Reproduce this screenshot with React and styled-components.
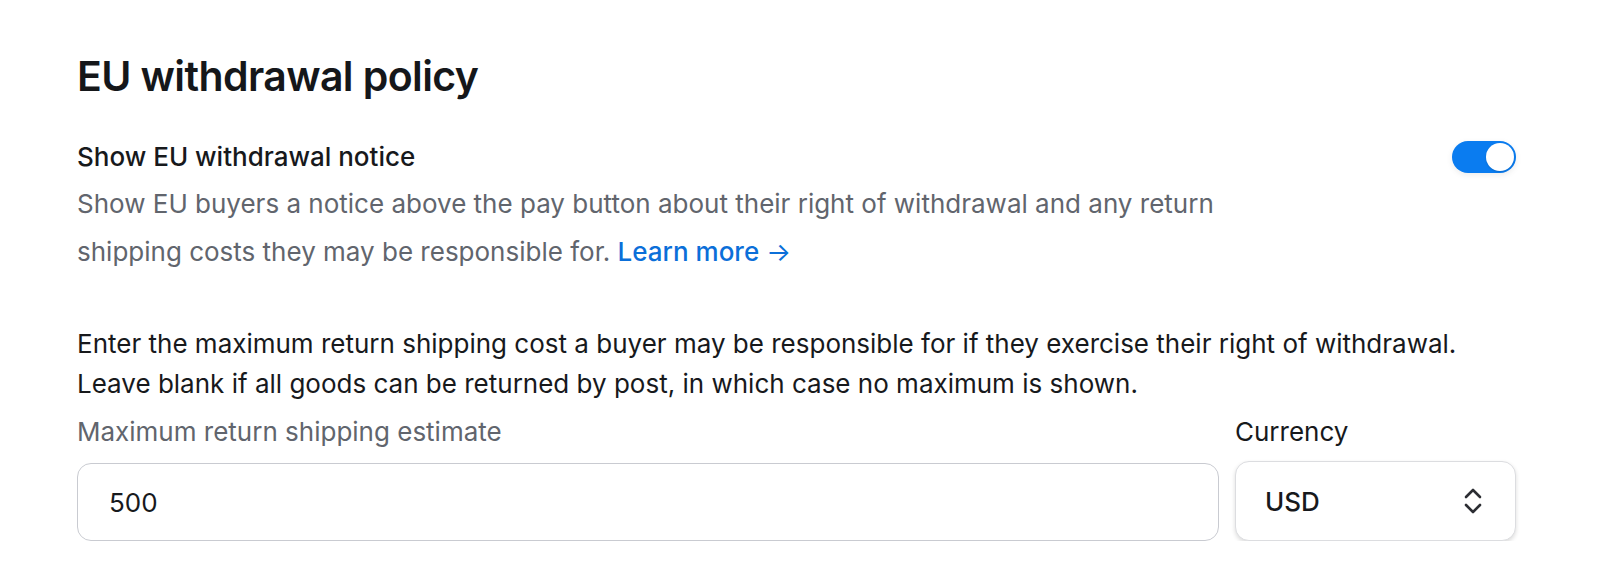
import React from "react"
import styled, { createGlobalStyle } from "styled-components"

const GlobalStyle = createGlobalStyle`
  html, body {
    margin: 0;
    padding: 0;
    background: #ffffff;
  }
  body {
    font-family: Inter, "Noto Sans", "Liberation Sans", sans-serif;
    color: #17191c;
    -webkit-font-smoothing: antialiased;
  }
`

const Page = styled.div`
  padding: 50px 108px 0 77px;
`

const Heading = styled.h2`
  margin: 0 0 37px 0;
  font-size: 41px;
  line-height: 52px;
  font-weight: 600;
  letter-spacing: -0.6px;
  color: #15171a;
`

const TitleRow = styled.div`
  display: flex;
  align-items: center;
  justify-content: space-between;
  height: 36px;
`

const SettingTitle = styled.div`
  font-size: 26px;
  line-height: 36px;
  font-weight: 500;
  color: #17191c;
`

const Description = styled.p`
  margin: 5px 0 0 0;
  max-width: 1160px;
  font-size: 26px;
  line-height: 48px;
  color: #61656d;
`

const Link = styled.a`
  color: #0b6fd9;
  font-weight: 500;
  text-decoration: none;
`

const Arrow = styled.span`
  font-weight: 400;
`

const Toggle = styled.button`
  position: relative;
  width: 64px;
  height: 32px;
  padding: 0;
  border: none;
  border-radius: 16px;
  background: ${({ $on }) => ($on ? "#0a7cf0" : "#d4d6db")};
  box-shadow: 0 2px 6px rgba(0, 0, 0, 0.08);
  cursor: pointer;
`

const Knob = styled.span`
  position: absolute;
  top: 2px;
  left: ${({ $on }) => ($on ? "34px" : "2px")};
  width: 28px;
  height: 28px;
  border-radius: 50%;
  background: #ffffff;
  box-shadow: 0 1px 2px rgba(0, 0, 0, 0.15);
`

const Instructions = styled.p`
  margin: 48px 0 0 0;
  font-size: 26px;
  line-height: 40px;
  color: #17191c;
`

const FieldGrid = styled.div`
  display: grid;
  grid-template-columns: 1fr 281px;
  column-gap: 16px;
  margin-top: 10px;
`

const Field = styled.div`
  display: flex;
  flex-direction: column;
`

const Label = styled.label`
  font-size: 26px;
  line-height: 36px;
  margin-bottom: 13px;
  color: ${({ $muted }) => ($muted ? "#61656d" : "#17191c")};
`

const Input = styled.input`
  box-sizing: border-box;
  height: 78px;
  width: 100%;
  padding: 0 31px;
  border: 1.5px solid #c9cbd1;
  border-radius: 14px;
  font-family: inherit;
  font-size: 26px;
  color: #17191c;
  background: #ffffff;
  outline: none;
`

const Select = styled.div`
  box-sizing: border-box;
  display: flex;
  align-items: center;
  justify-content: space-between;
  height: 80px;
  margin-top: -2px;
  padding: 0 32px 0 29px;
  border: 1px solid #dcdde0;
  border-radius: 14px;
  background: #ffffff;
  box-shadow: 0 2px 4px rgba(0, 0, 0, 0.14);
  font-size: 26px;
  font-weight: 500;
  color: #17191c;
`

const UpDown = () => (
  <svg width="20" height="28" viewBox="0 0 20 28" fill="none">
    <path
      d="M3 10 L10 3 L17 10"
      stroke="#2c2e33"
      strokeWidth="2.6"
      strokeLinecap="round"
      strokeLinejoin="round"
    />
    <path
      d="M3 18 L10 25 L17 18"
      stroke="#2c2e33"
      strokeWidth="2.6"
      strokeLinecap="round"
      strokeLinejoin="round"
    />
  </svg>
)

const App = () => (
  <Page>
    <GlobalStyle />
    <Heading>EU withdrawal policy</Heading>
    <TitleRow>
      <SettingTitle>Show EU withdrawal notice</SettingTitle>
      <Toggle $on aria-label="Show EU withdrawal notice">
        <Knob $on />
      </Toggle>
    </TitleRow>
    <Description>
      Show EU buyers a notice above the pay button about their right of
      withdrawal and any return shipping costs they may be responsible for.{" "}
      <Link href="#">
        Learn more <Arrow>→</Arrow>
      </Link>
    </Description>
    <Instructions>
      Enter the maximum return shipping cost a buyer may be responsible for if
      they exercise their right of withdrawal.
      <br />
      Leave blank if all goods can be returned by post, in which case no
      maximum is shown.
    </Instructions>
    <FieldGrid>
      <Field>
        <Label $muted>Maximum return shipping estimate</Label>
        <Input defaultValue="500" />
      </Field>
      <Field>
        <Label>Currency</Label>
        <Select>
          USD
          <UpDown />
        </Select>
      </Field>
    </FieldGrid>
  </Page>
)

export default App
